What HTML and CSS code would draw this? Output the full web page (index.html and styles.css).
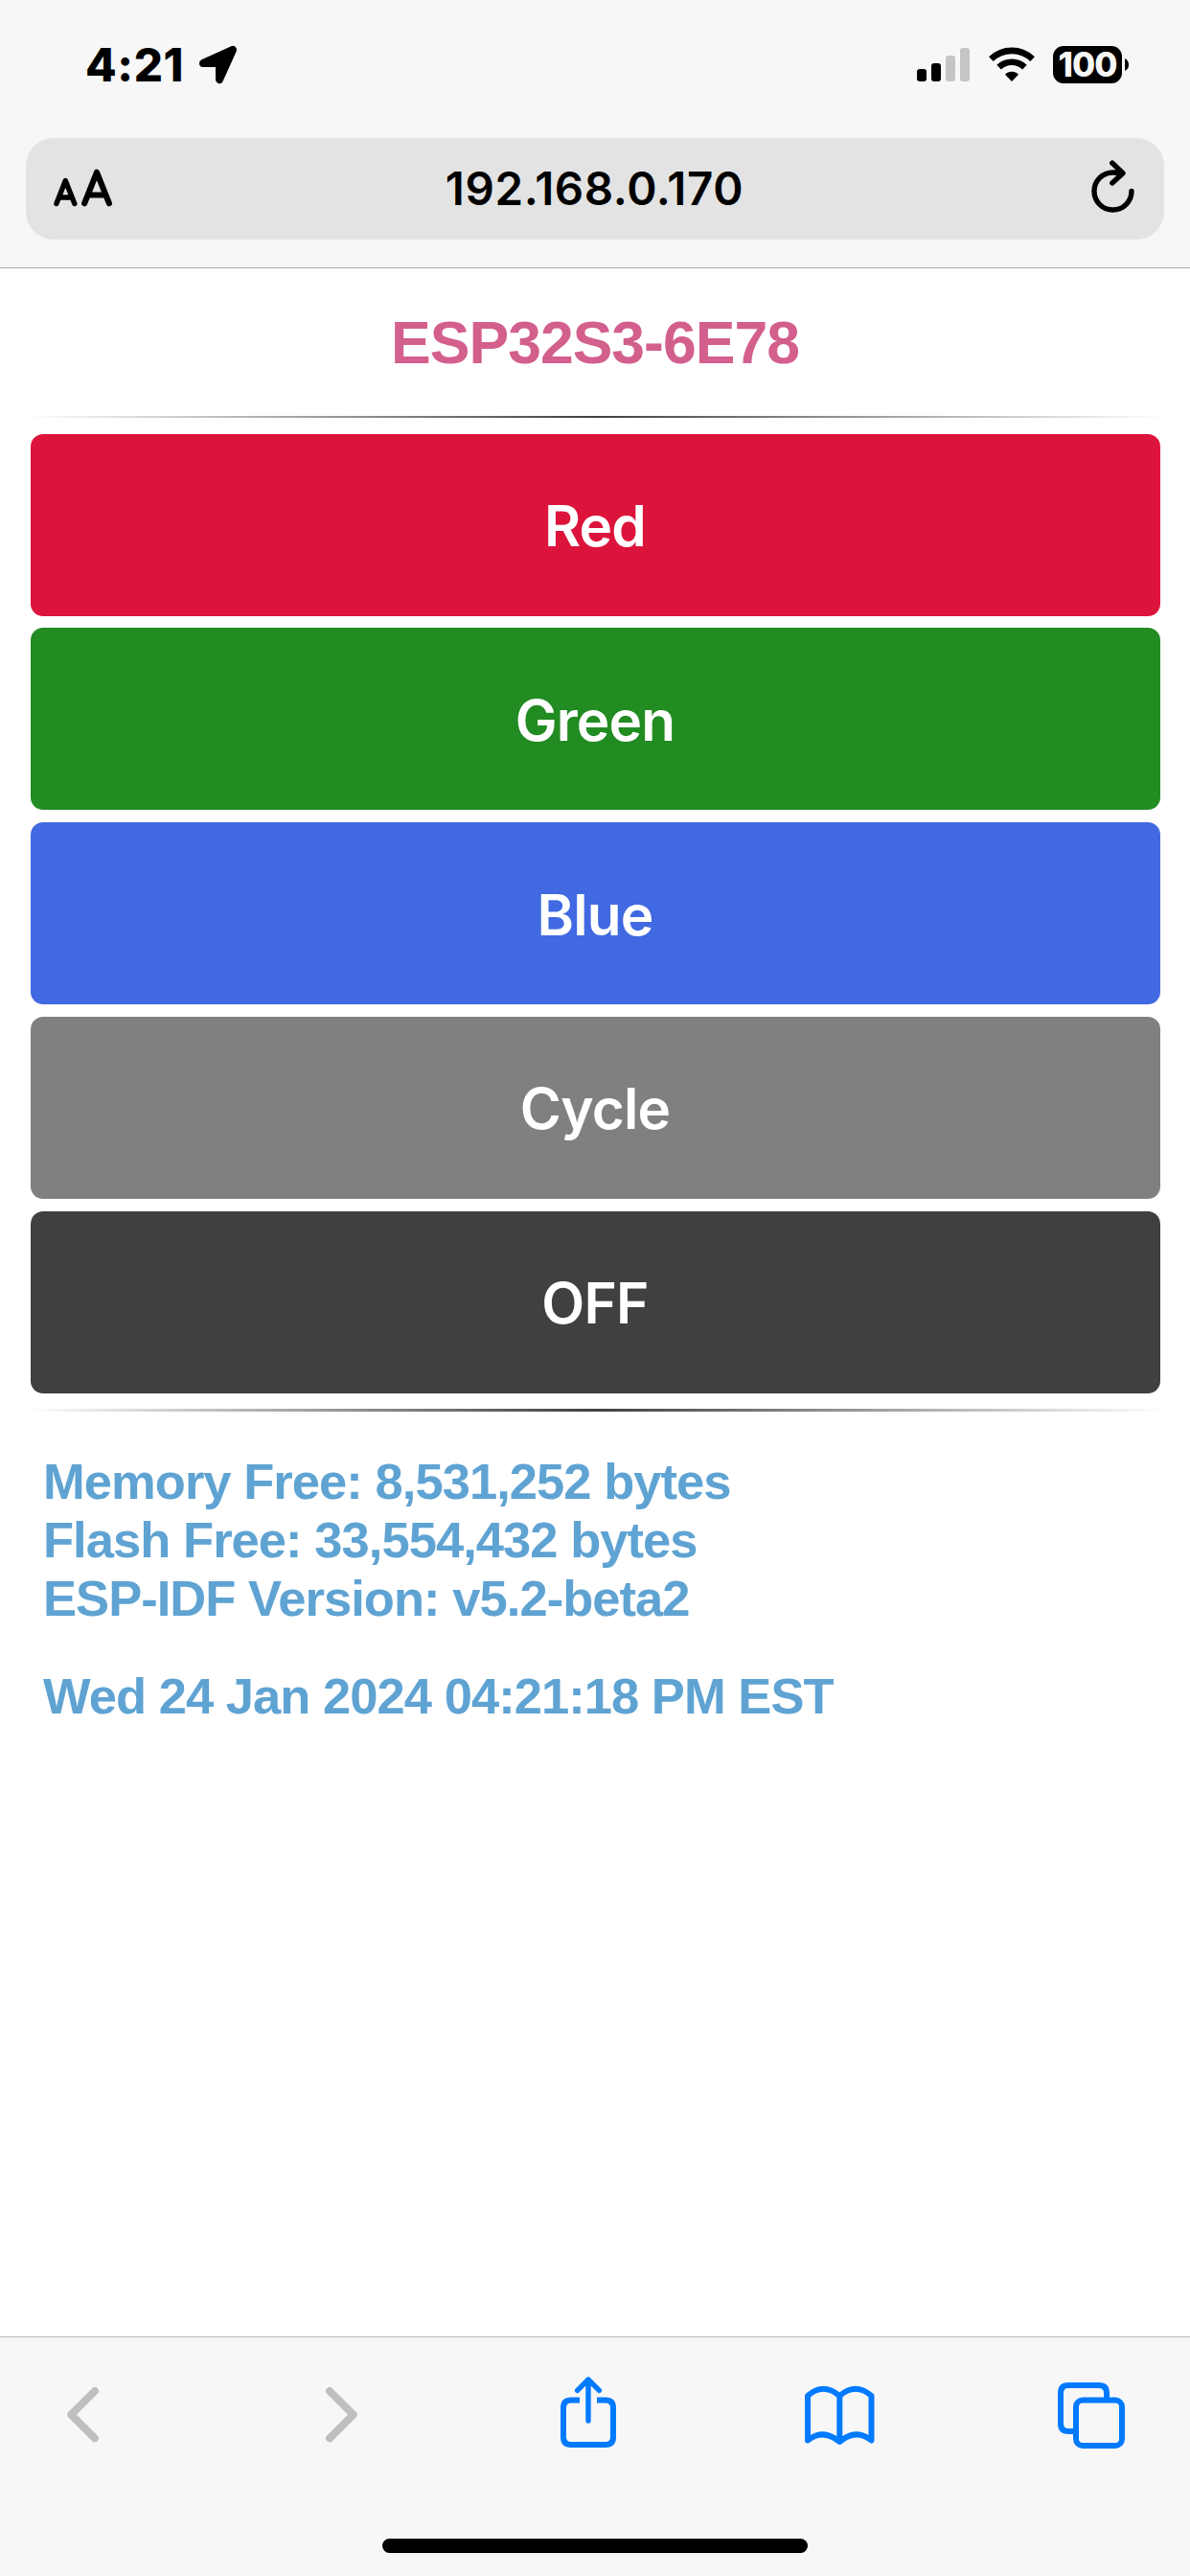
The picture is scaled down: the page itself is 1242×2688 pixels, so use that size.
FILE: index.html
```html
<!DOCTYPE html>
<html lang="en">
<head>
<meta charset="utf-8">
<title>ESP32S3-6E78</title>
<link rel="stylesheet" href="styles.css">
</head>
<body>
<header class="chrome-top">
  <div class="status">
    <span class="clock">4:21</span>
    <svg class="location" viewBox="0 0 40 40"><path d="M35 4 21 35V18H4Z" stroke="#000" stroke-width="8" stroke-linejoin="round"/></svg>
    <svg class="signal" viewBox="0 0 55 35"><g><rect y="22" width="10" height="13" rx="3"/><rect x="15" y="16" width="10" height="19" rx="3"/></g><g fill="#c5c5c5"><rect x="30" y="8" width="10" height="27" rx="3"/><rect x="45" width="10" height="35" rx="3"/></g></svg>
    <svg class="wifi" viewBox="0 0 48 36"><g fill="none" stroke="#000" stroke-width="6.6"><path d="M2.4 12.6a31 31 0 0 1 43.2 0"/><path d="M10.6 21.2a19.2 19.2 0 0 1 26.8 0"/></g><path d="M24 36 17 28.8Q17.5 28 19 27Q24 24.4 29 27Q30.500 28 31 28.800Z"/></svg>
    <span class="battery">100</span>
    <svg class="nub" viewBox="0 0 4 13"><path d="M0 0Q4 2 4 6.500T0 13Z"/></svg>
  </div>
  <div class="address">
    <svg class="text-size" viewBox="0 0 62 40" fill="none" stroke="#000" stroke-linecap="round" stroke-linejoin="round"><path stroke-width="5.400" d="M2.900 35.500 12.300 11.500 21.800 35.500M6.500 29H18.200"/><path stroke-width="6.200" d="M32.200 35.200 45 2.800 57.900 35.200M36.500 26.500H53.500"/></svg>
    <span class="url">192.168.0.170</span>
    <svg class="reload" viewBox="0 0 46 56" fill="none" stroke="#000" stroke-width="5.400" stroke-linecap="round" stroke-linejoin="round"><path d="M42 33.500A19.500 19.500 0 1 1 22.500 14Q28 14 32 14.500M21.800 4 33 14.700 21.800 25"/></svg>
  </div>
</header>
<main class="page">
  <h1 class="title">ESP32S3-6E78</h1>
  <div class="rule"></div>
  <div class="buttons">
    <button class="btn red">Red</button>
    <button class="btn green">Green</button>
    <button class="btn blue">Blue</button>
    <button class="btn cycle">Cycle</button>
    <button class="btn off">OFF</button>
  </div>
  <div class="rule thick"></div>
  <div class="info">
    <p>Memory Free: 8,531,252 bytes<br>Flash Free: 33,554,432 bytes<br>ESP-IDF Version: v5.2-beta2</p>
    <p>Wed 24 Jan 2024 04:21:18 PM EST</p>
  </div>
</main>
<footer class="chrome-bottom">
  <nav class="tools">
    <svg class="tool muted" viewBox="0 0 100 90"><path d="M62 21 37.200 45.700 62 70.300"/></svg>
    <svg class="tool muted" viewBox="0 0 100 90"><path d="M37 21 61.800 45.700 37 70.300"/></svg>
    <svg class="tool" viewBox="0 0 100 90"><path stroke-linecap="butt" d="M41 30.500H32Q24 30.500 24 38.500V69Q24 77 32 77H68Q76 77 76 69V38.500Q76 30.500 68 30.500H59"/><path stroke-width="5.400" d="M50 52V9M38.600 20.400 50 9 61.400 20.400"/></svg>
    <svg class="tool" viewBox="0 0 100 90"><path d="M49.300 26V72.500M49.300 26Q32 11.500 16 26V72.500Q32 59.500 49.300 74Q66 59.500 82.500 72.500V26Q66 11.500 49.300 26"/></svg>
    <svg class="tool" viewBox="0 0 100 90"><path stroke-linecap="butt" d="M34 63H26Q18 63 18 55V23Q18 15 26 15H58Q66 15 66 23V30"/><rect x="34" y="30.500" width="48" height="47.500" rx="7"/></svg>
  </nav>
  <div class="home"></div>
</footer>
</body>
</html>
```
FILE: styles.css
```css
* { box-sizing: border-box; }
body {
  margin: 0;
  width: 1242px;
  height: 2688px;
  display: flex;
  flex-direction: column;
  background: #fff;
  font-family: Inter, "Liberation Sans", sans-serif;
}
svg { display: block; flex: none; overflow: visible; }

.chrome-top {
  height: 280px;
  flex: none;
  background: #f7f7f7;
  border-bottom: 1px solid #aaa;
}
.status {
  height: 144px;
  padding: 48px 64px 0 89px;
  display: flex;
  align-items: flex-start;
}
.clock {
  width: 119px;
  font-size: 47.500px;
  font-weight: 800;
  line-height: 40px;
  letter-spacing: .6px;
}
.location { width: 40px; height: 40px; }
.signal { width: 55px; height: 35px; margin: 2px 20px 0 auto; }
.wifi { width: 48px; height: 36px; margin: 1px 19px 0 0; }
.battery {
  width: 72px;
  height: 39px;
  border-radius: 11px;
  background: #000;
  color: #f7f7f7;
  font-size: 35px;
  font-weight: 850;
  line-height: 39px;
  letter-spacing: -1px;
  text-align: center;
}
.nub { width: 4px; height: 13px; margin: 13px 0 0 3px; }

.address {
  margin: 0 27px;
  height: 106px;
  padding: 0 30px 0 29px;
  display: grid;
  grid-template-columns: 62px 1fr 62px;
  align-items: center;
  border-radius: 29px;
  background: #e3e3e3;
}
.text-size { width: 62px; height: 40px; }
.url {
  text-align: center;
  font-size: 47.500px;
  font-weight: 600;
  line-height: 56px;
  letter-spacing: .6px;
}
.reload { width: 46px; height: 56px; justify-self: end; margin-top: -6px; }

.page {
  flex: 1;
  padding: 0 27px;
  font-family: "Liberation Sans", Arial, sans-serif;
}
.title {
  height: 154px;
  margin: 0;
  padding-top: 42px;
  text-align: center;
  color: #d35f8d;
  font-size: 62.500px;
  font-weight: 700;
  line-height: 70px;
  letter-spacing: -1px;
}
.rule {
  height: 2px;
  background: linear-gradient(to right, rgba(64,64,64,0), #404040, rgba(64,64,64,0));
}
.rule.thick { height: 3px; }
.buttons {
  padding: 16.500px 4.500px 16px;
  display: grid;
  grid-auto-rows: 190.200px;
  gap: 12.600px;
}
.btn {
  border: 0;
  padding: 2px 0 0;
  border-radius: 13px;
  color: #fff;
  font-family: Inter, sans-serif;
  font-size: 58.500px;
  font-weight: 600;
  letter-spacing: -.8px;
}
.red { background: #dc143c; }
.green { background: #228b22; }
.blue { background: #4169e1; }
.cycle { background: #808080; }
.off { background: #404040; }
.info {
  padding: 42px 18px 0;
  color: #5fa3d3;
  font-size: 52.500px;
  font-weight: 700;
  line-height: 61px;
  letter-spacing: -.95px;
}
.info p { margin: 0 0 41px; }

.chrome-bottom {
  height: 250px;
  flex: none;
  background: #f7f7f7;
  border-top: 1px solid #b9b9b9;
}
.tools {
  padding: 35px 0 0 37px;
  display: grid;
  grid-template-columns: 270px 257px 263px 262px 100px;
}
.tool {
  width: 100px;
  height: 90px;
  fill: none;
  stroke: #007aff;
  stroke-width: 6;
  stroke-linecap: round;
  stroke-linejoin: round;
}
.tool.muted { stroke: #bfbfbf; stroke-width: 8; }
.home {
  width: 444px;
  height: 15px;
  margin: 85px auto 0;
  border-radius: 8px;
  background: #000;
}
```
